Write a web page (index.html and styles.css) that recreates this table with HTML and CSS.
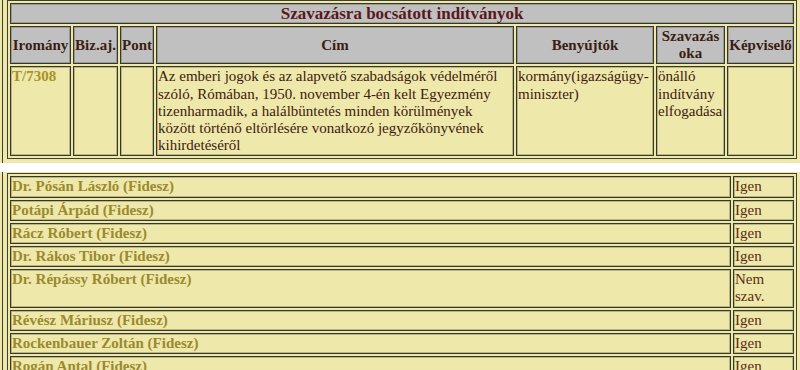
FILE: index.html
```html
<!DOCTYPE html>
<html lang="hu">
<head>
<meta charset="utf-8">
<title>Szavazásra bocsátott indítványok</title>
<link rel="stylesheet" href="styles.css">
</head>
<body>
<div class="section first">
  <table class="grid">
    <colgroup>
      <col class="c-iromany"><col class="c-biz"><col class="c-pont"><col class="c-cim"><col class="c-beny"><col class="c-oka"><col class="c-kepv">
    </colgroup>
    <tr><th class="title" colspan="7">Szavazásra bocsátott indítványok</th></tr>
    <tr>
      <th>Iromány</th><th>Biz.aj.</th><th>Pont</th><th>Cím</th><th>Benyújtók</th><th>Szavazás oka</th><th>Képviselő</th>
    </tr>
    <tr>
      <td class="irom">T/7308</td>
      <td></td>
      <td></td>
      <td>Az emberi jogok és az alapvető szabadságok védelméről szóló, Rómában, 1950. november 4-én kelt Egyezmény tizenharmadik, a halálbüntetés minden körülmények között történő eltörlésére vonatkozó jegyzőkönyvének kihirdetéséről</td>
      <td>kormány(igazságügy-miniszter)</td>
      <td>önálló indítvány elfogadása</td>
      <td></td>
    </tr>
  </table>
</div>
<div class="section second">
  <table class="grid">
    <colgroup><col class="c-name"><col class="c-vote"></colgroup>
    <tr><td class="name">Dr. Pósán László (Fidesz)</td><td class="vote">Igen</td></tr>
    <tr><td class="name">Potápi Árpád (Fidesz)</td><td class="vote">Igen</td></tr>
    <tr><td class="name">Rácz Róbert (Fidesz)</td><td class="vote">Igen</td></tr>
    <tr><td class="name">Dr. Rákos Tibor (Fidesz)</td><td class="vote">Igen</td></tr>
    <tr><td class="name">Dr. Répássy Róbert (Fidesz)</td><td class="vote">Nem szav.</td></tr>
    <tr><td class="name">Révész Máriusz (Fidesz)</td><td class="vote">Igen</td></tr>
    <tr><td class="name">Rockenbauer Zoltán (Fidesz)</td><td class="vote">Igen</td></tr>
    <tr><td class="name">Rogán Antal (Fidesz)</td><td class="vote">Igen</td></tr>
  </table>
</div>
</body>
</html>
```
FILE: styles.css
```css
html, body {
  margin: 0;
  padding: 0;
  background: #ffffff;
}
body {
  font-family: "Liberation Serif", "Times New Roman", serif;
  font-size: 15px;
  color: #3d2010;
  width: 800px;
  overflow: hidden;
}
.section {
  background: #eee8aa;
  border-left: 1px solid #404030;
  margin-left: 2px;
  box-shadow: -2px 0 0 #eee8aa;
}
.section.first {
  padding-bottom: 4px;
}
.section.second {
  margin-top: 9px;
  padding-top: 1px;
  height: 198px;
}
table.grid {
  table-layout: fixed;
  border-collapse: separate;
  border-spacing: 2px;
  border: 1px solid #404030;
  box-sizing: border-box;
  margin-left: 4px;
  width: 790px;
}
.c-iromany { width: 61px; }
.c-biz { width: 45px; }
.c-pont { width: 34px; }
.c-cim { width: 358px; }
.c-beny { width: 138px; }
.c-oka { width: 69px; }
.c-kepv { width: 67px; }
.c-name { width: 721px; }
.c-vote { width: 61px; }

th, td {
  border: 1px solid #38382a;
  box-shadow: inset 0 0 0 1px rgba(64, 64, 48, 0.3);
  padding: 1px;
  line-height: 17.2px;
}
th {
  background: #c0c0c0;
  color: #3b1d12;
  font-weight: bold;
  text-align: center;
  vertical-align: middle;
  padding: 1px 0;
}
th.title {
  color: #5a1818;
  font-size: 17px;
  line-height: 19px;
  padding: 0;
}
td {
  background: #eee8aa;
  vertical-align: top;
  text-align: left;
}
td.irom {
  color: #a8922a;
  font-weight: bold;
}
td.name {
  color: #9a8a2e;
  font-weight: bold;
}
td.vote {
  color: #5b2c14;
}
```
